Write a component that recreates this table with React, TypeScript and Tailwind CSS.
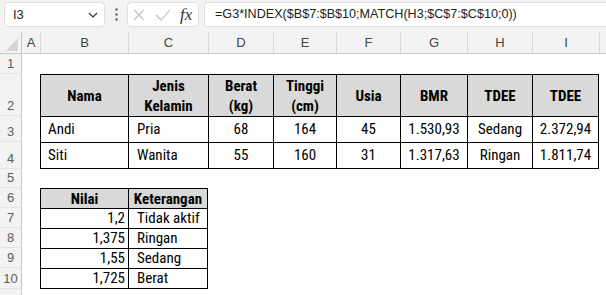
import type { ReactNode } from 'react';
import { clsx } from 'clsx';

const sheetFont = "font-['Liberation_Sans_Narrow','Arial_Narrow','Roboto_Condensed',Roboto,sans-serif]";
const uiFont = "font-['Liberation_Sans',Arial,sans-serif]";

const columns = [
  { label: 'A', width: 'w-[18px]' },
  { label: 'B', width: 'w-[88px]' },
  { label: 'C', width: 'w-[80px]' },
  { label: 'D', width: 'w-[65px]' },
  { label: 'E', width: 'w-[63px]' },
  { label: 'F', width: 'w-[64px]' },
  { label: 'G', width: 'w-[67px]' },
  { label: 'H', width: 'w-[65px]' },
  { label: 'I', width: 'w-[67px]' },
];

const people = [
  { nama: 'Andi', jk: 'Pria', berat: '68', tinggi: '164', usia: '45', bmr: '1.530,93', level: 'Sedang', tdee: '2.372,94' },
  { nama: 'Siti', jk: 'Wanita', berat: '55', tinggi: '160', usia: '31', bmr: '1.317,63', level: 'Ringan', tdee: '1.811,74' },
];

const factors = [
  { nilai: '1,2', ket: 'Tidak aktif' },
  { nilai: '1,375', ket: 'Ringan' },
  { nilai: '1,55', ket: 'Sedang' },
  { nilai: '1,725', ket: 'Berat' },
];

// Baris sheet: nomor baris di kiri, kolom A kosong, lalu isi sel.
function Row({ n, height, children }: { n?: number; height: string; children?: ReactNode }) {
  return (
    <div className={clsx('flex', height)}>
      <div
        className={clsx(
          uiFont,
          'flex w-[22px] shrink-0 items-end justify-center border-r border-b border-r-[#c8c8c8] border-b-[#e3e3e3] bg-[#f3f3f3] pb-[1px] text-[13px] leading-[16px] text-[#5c5c5c]',
        )}
      >
        {n}
      </div>
      <div className="w-[18px] shrink-0" />
      {children}
    </div>
  );
}

function Cell({
  width,
  className,
  children,
}: {
  width: string;
  className?: string;
  children?: ReactNode;
}) {
  return (
    <div className={clsx(sheetFont, 'flex shrink-0 items-center text-[15px] text-black', width, className)}>
      {children}
    </div>
  );
}

function FormulaBar() {
  return (
    <div className={clsx(uiFont, 'flex h-[32px] items-start bg-[#f3f3f3] pt-[2px]')}>
      <div className="ml-[4px] flex h-[25px] w-[101px] items-center justify-between rounded-[4px] border border-[#dedede] bg-white pl-[8px] pr-[6px] text-[13px] text-[#222]">
        <span>I3</span>
        <svg width="10" height="6" viewBox="0 0 10 6" fill="none">
          <path d="M1 1 L5 5 L9 1" stroke="#333" strokeWidth="1.2" />
        </svg>
      </div>
      <div className="flex h-[25px] w-[22px] items-center justify-center">
        <svg width="3" height="13" viewBox="0 0 3 13" fill="#444">
          <rect x="0.5" y="0.5" width="2" height="2" />
          <rect x="0.5" y="5.5" width="2" height="2" />
          <rect x="0.5" y="10.5" width="2" height="2" />
        </svg>
      </div>
      <div className="flex h-[25px] w-[72px] items-center rounded-[4px] border border-[#dedede] bg-white pl-[5px]">
        <svg width="12" height="12" viewBox="0 0 12 12" fill="none">
          <path d="M1 1 L11 11 M11 1 L1 11" stroke="#bdbdbd" strokeWidth="1.1" />
        </svg>
        <svg className="ml-[10px]" width="16" height="12" viewBox="0 0 16 12" fill="none">
          <path d="M1 6 L6 11 L15 1" stroke="#bdbdbd" strokeWidth="1.1" />
        </svg>
        <span className="ml-[9px] font-['Liberation_Serif',serif] text-[17px] leading-none text-[#333] italic">
          fx
        </span>
      </div>
      <div className="ml-[5px] flex h-[25px] flex-1 items-center rounded-l-[4px] border border-r-0 border-[#dedede] bg-white pl-[10px] text-[12.6px] whitespace-nowrap text-[#222]">
        =G3*INDEX($B$7:$B$10;MATCH(H3;$C$7:$C$10;0))
      </div>
    </div>
  );
}

function ColumnHeaders() {
  return (
    <div className={clsx(uiFont, 'flex h-[22px] border-b border-[#c8c8c8] bg-[#f3f3f3] text-[13px] text-[#444]')}>
      <div className="relative w-[22px] shrink-0 border-r border-[#c8c8c8]">
        <svg className="absolute right-[3px] bottom-[2px]" width="12" height="13" viewBox="0 0 12 13">
          <path d="M12 0 L12 13 L0 13 Z" fill="#d6d6d6" />
        </svg>
      </div>
      {columns.map((c, i) => (
        <div
          key={c.label}
          className={clsx(
            'flex shrink-0 items-center justify-center',
            c.width,
            i > 0 && 'border-l border-[#dadada]',
          )}
        >
          {c.label}
        </div>
      ))}
      <div className="flex-1 border-l border-[#dadada]" />
    </div>
  );
}

export default function App() {
  const th = 'justify-center border-l border-t border-black bg-[#d9d9d9] text-center font-bold leading-[20px]';
  const td = 'border-l border-t border-black';

  return (
    <div className="h-[295px] w-[606px] overflow-hidden bg-white">
      <FormulaBar />
      <ColumnHeaders />

      <Row n={1} height="h-[20px]" />

      {/* Tabel BMR / TDEE */}
      <Row n={2} height="h-[42px]">
        <Cell width="w-[88px]" className={th}>Nama</Cell>
        <Cell width="w-[80px]" className={th}>Jenis<br />Kelamin</Cell>
        <Cell width="w-[65px]" className={th}>Berat<br />(kg)</Cell>
        <Cell width="w-[63px]" className={th}>Tinggi<br />(cm)</Cell>
        <Cell width="w-[64px]" className={th}>Usia</Cell>
        <Cell width="w-[67px]" className={th}>BMR</Cell>
        <Cell width="w-[65px]" className={th}>TDEE</Cell>
        <Cell width="w-[67px]" className={clsx(th, 'border-r')}>TDEE</Cell>
      </Row>
      {people.map((p, i) => {
        const last = i === people.length - 1;
        return (
          <Row key={p.nama} n={3 + i} height={last ? 'h-[27px]' : 'h-[26px]'}>
            <Cell width="w-[88px]" className={clsx(td, 'pl-[7px]', last && 'border-b')}>{p.nama}</Cell>
            <Cell width="w-[80px]" className={clsx(td, 'pl-[8px]', last && 'border-b')}>{p.jk}</Cell>
            <Cell width="w-[65px]" className={clsx(td, 'justify-center', last && 'border-b')}>{p.berat}</Cell>
            <Cell width="w-[63px]" className={clsx(td, 'justify-center', last && 'border-b')}>{p.tinggi}</Cell>
            <Cell width="w-[64px]" className={clsx(td, 'justify-center', last && 'border-b')}>{p.usia}</Cell>
            <Cell width="w-[67px]" className={clsx(td, 'justify-center', last && 'border-b')}>{p.bmr}</Cell>
            <Cell width="w-[65px]" className={clsx(td, 'justify-center', last && 'border-b')}>{p.level}</Cell>
            <Cell width="w-[67px]" className={clsx(td, 'justify-center border-r', last && 'border-b')}>{p.tdee}</Cell>
          </Row>
        );
      })}

      <Row n={5} height="h-[19px]" />

      {/* Tabel faktor aktivitas */}
      <Row n={6} height="h-[20px]">
        <Cell width="w-[88px]" className={th}>Nilai</Cell>
        <Cell width="w-[80px]" className={clsx(th, 'border-r')}>Keterangan</Cell>
      </Row>
      {factors.map((f, i) => {
        const last = i === factors.length - 1;
        return (
          <Row key={f.nilai} n={7 + i} height={last ? 'h-[21px]' : 'h-[20px]'}>
            <Cell width="w-[88px]" className={clsx(td, 'justify-end pr-[3px]', last && 'border-b')}>{f.nilai}</Cell>
            <Cell width="w-[80px]" className={clsx(td, 'border-r pl-[8px]', last && 'border-b')}>{f.ket}</Cell>
          </Row>
        );
      })}

      {/* Baris 11 terpotong di tepi bawah; nomornya tidak terlihat */}
      <Row height="h-[20px]" />
    </div>
  );
}
